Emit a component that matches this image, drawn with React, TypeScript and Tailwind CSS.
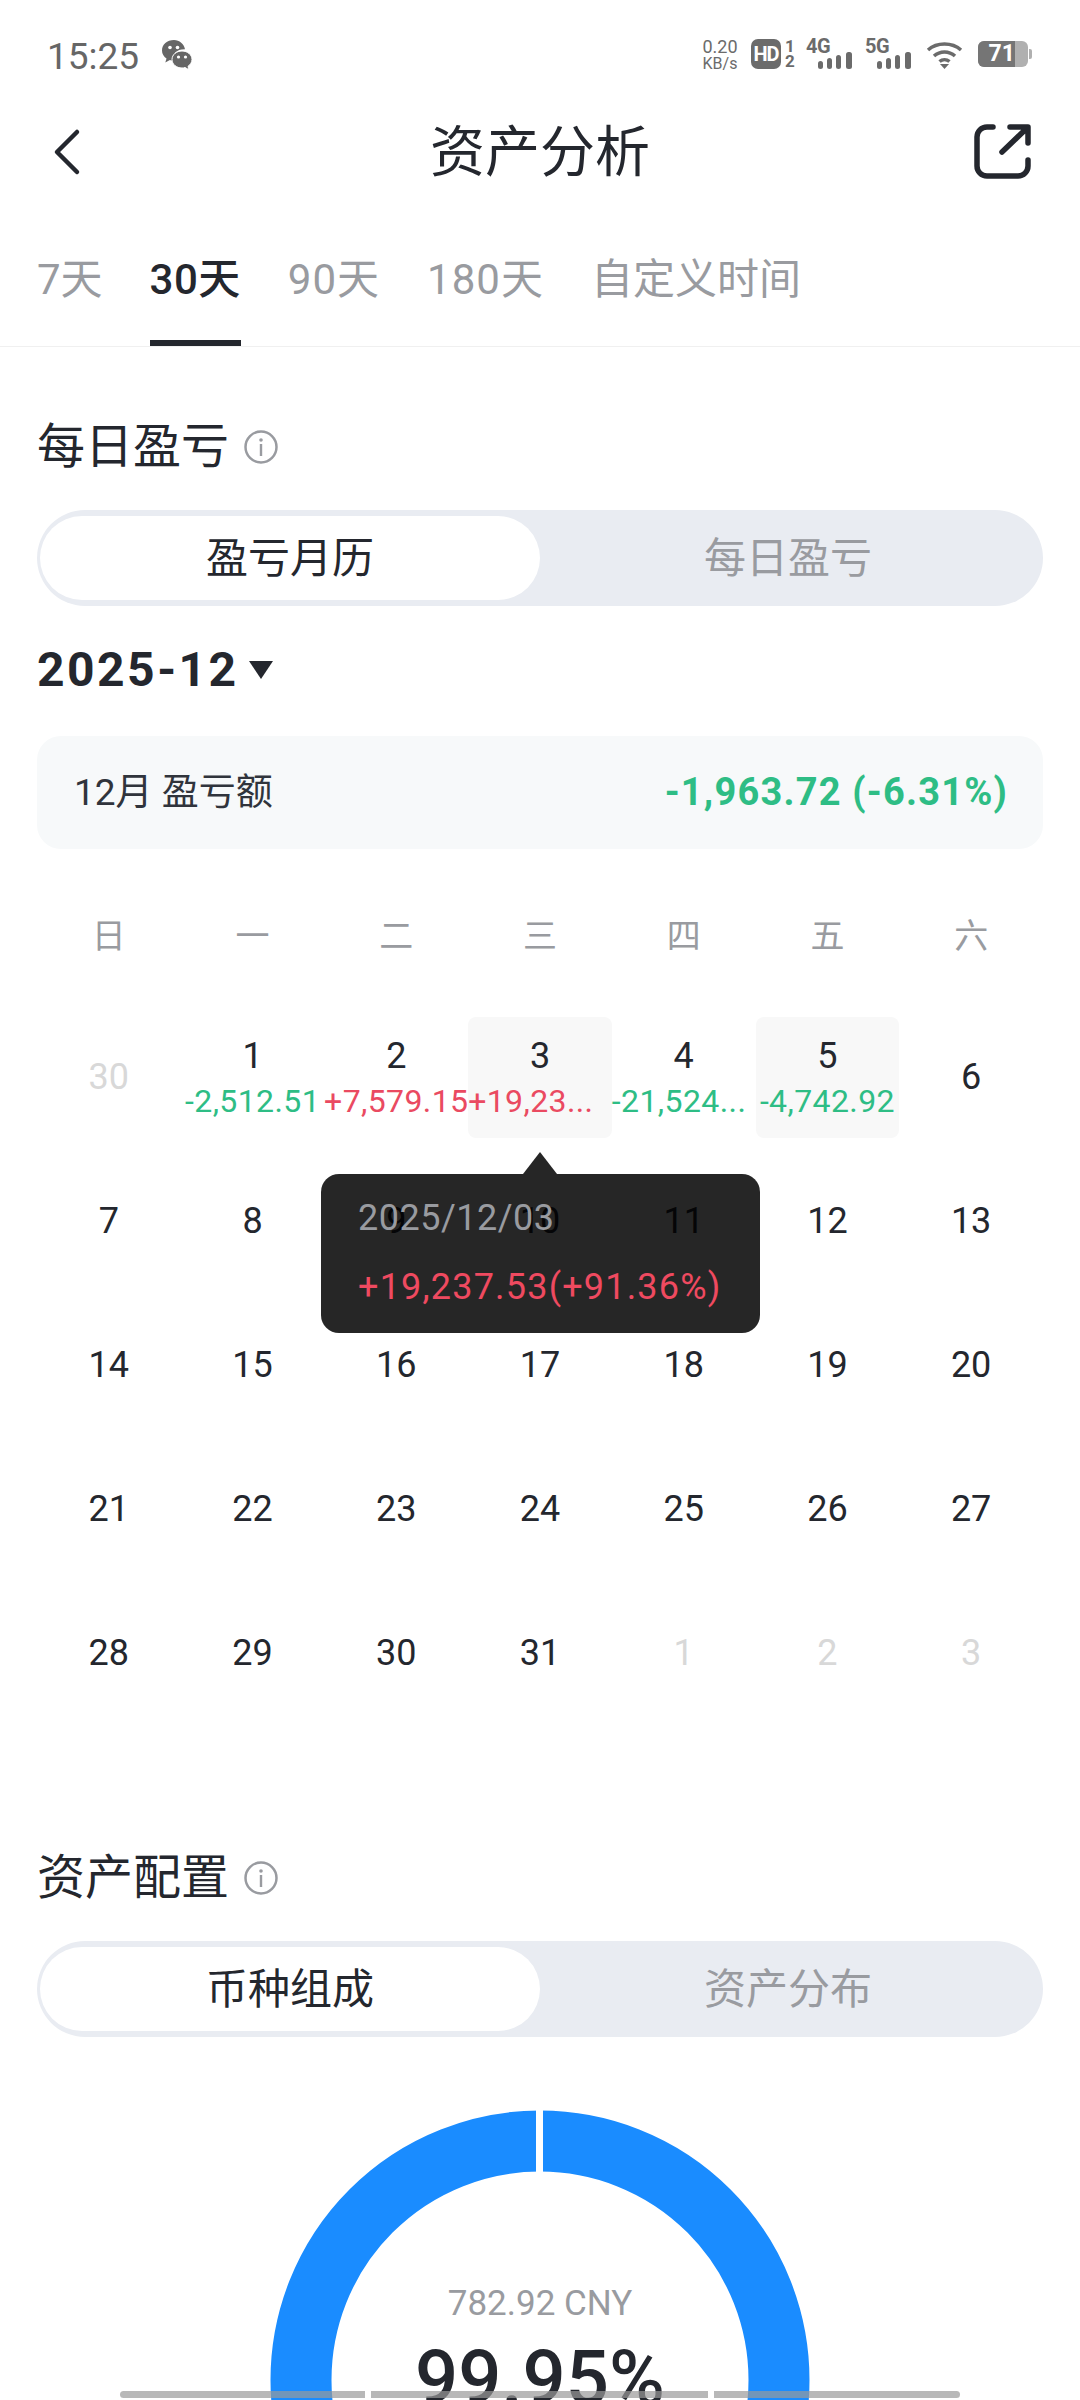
const FONT = "font-['Roboto','Noto_Sans_CJK_SC',sans-serif]";

const rows = [
  [30, 1, 2, 3, 4, 5, 6],
  [7, 8, 9, 10, 11, 12, 13],
  [14, 15, 16, 17, 18, 19, 20],
  [21, 22, 23, 24, 25, 26, 27],
  [28, 29, 30, 31, 1, 2, 3],
];

// first row values, keyed by date
const pnl: Record<number, { text: string; up: boolean; marked?: boolean; cut?: boolean }> = {
  1: { text: "-2,512.51", up: false },
  2: { text: "+7,579.15", up: true },
  3: { text: "+19,23...", up: true, marked: true, cut: true },
  4: { text: "-21,524...", up: false, cut: true },
  5: { text: "-4,742.92", up: false, marked: true },
};

function Signal() {
  return (
    <svg width="35" height="17" viewBox="0 0 35 17" className="absolute left-[12px] top-[13px]">
      <rect x="0" y="9" width="5" height="8" rx="2.5" fill="#6b6b6b" />
      <rect x="9" y="6" width="5" height="11" rx="2.5" fill="#6b6b6b" />
      <rect x="18" y="3" width="5" height="14" rx="2.5" fill="#6b6b6b" />
      <rect x="28" y="0" width="6" height="17" rx="2.5" fill="#6b6b6b" />
    </svg>
  );
}

function StatusBar() {
  return (
    <div className="h-[92px] pl-[47px] pr-[48px] flex items-center justify-between pt-[20px]">
      <div className="flex items-center">
        <span className="text-[37px] leading-none text-[#666666]">15:25</span>
        <svg width="32" height="32" viewBox="0 0 32 32" className="ml-[22px] -mt-[2px]">
          <path d="M13 1C6 1 1 5.600 1 11.500c0 3.400 1.800 6.200 4.500 8l-1.200 4 4.600-2.400C10 21.500 11 21.700 12 21.700 11 15 15.500 10 24 10.200 23 5 18.500 1 13 1z" fill="#666666" />
          <circle cx="9" cy="8.500" r="1.800" fill="#fff" />
          <circle cx="16.500" cy="8.500" r="1.800" fill="#fff" />
          <path d="M21 12c-5.500 0-10 3.600-10 8.500s4.500 8.500 10 8.500c1 0 2-.1 3-.5l4 2.300-1-3.500c2.400-1.600 4-4 4-6.800 0-4.900-4.500-8.500-10-8.500z" fill="#666666" stroke="#fff" strokeWidth="1" />
          <circle cx="17.500" cy="18" r="1.600" fill="#fff" />
          <circle cx="24.500" cy="18" r="1.600" fill="#fff" />
        </svg>
      </div>
      <div className="flex items-start text-[#6b6b6b] -mt-[2px]">
        <div className="w-[38px] flex flex-col items-center">
          <span className="text-[18px] leading-[16px]">0.20</span>
          <span className="text-[16px] leading-[17px]">KB/s</span>
        </div>
        <div className="ml-[12px] w-[30px] h-[30px] rounded-[7px] bg-[#6b6b6b] text-white text-[20px] font-bold leading-[30px] text-center tracking-[-1px]">HD</div>
        <div className="ml-[3px] w-[12px] flex flex-col items-center text-[17px] font-bold leading-[15px]">
          <span>1</span>
          <span>2</span>
        </div>
        <div className="ml-[10px] w-[47px] h-[30px] relative">
          <span className="text-[20px] font-bold leading-[14px] block tracking-[-0.5px]">4G</span>
          <Signal />
        </div>
        <div className="ml-[12px] w-[48px] h-[30px] relative">
          <span className="text-[20px] font-bold leading-[14px] block tracking-[-0.5px]">5G</span>
          <Signal />
        </div>
        <svg width="37" height="28" viewBox="0 0 37 28" className="ml-[13px] mt-[2px]">
          <path d="M2 9C11 1 26 1 35 9" fill="none" stroke="#6b6b6b" strokeWidth="3.500" />
          <path d="M8 15C14 9.500 23 9.500 29 15" fill="none" stroke="#6b6b6b" strokeWidth="3.500" />
          <path d="M13.500 20.500c3-2.500 7-2.500 10 0" fill="none" stroke="#6b6b6b" strokeWidth="3.500" />
          <path d="M14 23h9l-4.500 5z" fill="#6b6b6b" />
        </svg>
        <div className="ml-[15px] mt-[2px] flex items-center">
          <div className="w-[50px] h-[26px] rounded-[6px] bg-[#b0b0b0] overflow-hidden">
            <div className="w-[37px] h-full bg-[#757575] text-white text-[23px] font-bold leading-[26px] text-right">71</div>
          </div>
          <div className="w-[3px] h-[10px] rounded-r-[2px] bg-[#b0b0b0] ml-[1px]" />
        </div>
      </div>
    </div>
  );
}

function Segment({ on, off }: { on: string; off: string }) {
  return (
    <div className="h-[96px] rounded-full bg-[#e9ecf2] flex items-center pl-[3px] pr-[7px] text-[42px]">
      <div className="w-[500px] h-[84px] rounded-full bg-white text-[#24272e] flex items-center justify-center">
        {on}
      </div>
      <div className="flex-1 text-center text-[#999ba0]">{off}</div>
    </div>
  );
}

function SectionTitle({ text }: { text: string }) {
  return (
    <div className="h-[60px] flex items-center text-[48px] text-[#24272e]">
      {text}
      <svg width="36" height="36" viewBox="0 0 36 36" className="ml-[14px]">
        <circle cx="18" cy="18" r="15.500" fill="none" stroke="#999ba0" strokeWidth="2.500" />
        <circle cx="18" cy="11" r="1.800" fill="#999ba0" />
        <rect x="16.800" y="15" width="2.400" height="12" fill="#999ba0" />
      </svg>
    </div>
  );
}

function DayCell({ day, rowIndex, colIndex }: { day: number; rowIndex: number; colIndex: number }) {
  const muted = (rowIndex === 0 && colIndex === 0) || (rowIndex === 4 && colIndex > 3);
  const item = rowIndex === 0 ? pnl[day] : undefined;

  if (item) {
    return (
      <div className="h-[144px] flex items-center">
        <div className={`w-full h-[121px] rounded-[8px] pt-[21px] flex flex-col items-center ${item.marked ? "bg-[#f8f8f8]" : ""}`}>
          <span className="text-[36px] leading-[36px] text-[#24272e]">{day}</span>
          <span className={`mt-[9px] text-[32px] leading-[36px] whitespace-nowrap tracking-[0.4px] ${item.cut ? "self-start" : ""} ${item.up ? "text-[#ea4a61]" : "text-[#2ebd85]"}`}>
            {item.text}
          </span>
        </div>
      </div>
    );
  }

  return (
    <div className={`h-[144px] flex items-center justify-center text-[36px] ${muted ? "text-[#d8d8d8]" : "text-[#24272e]"}`}>
      {day}
    </div>
  );
}

function Calendar() {
  return (
    <div className="relative mt-[47px]">
      <div className="grid grid-cols-7 h-[80px] items-center text-center text-[34px] text-[#999ba0]">
        {["日", "一", "二", "三", "四", "五", "六"].map((w) => (
          <span key={w}>{w}</span>
        ))}
      </div>
      <div className="grid grid-cols-7 mt-[29px]">
        {rows.map((row, r) =>
          row.map((day, c) => <DayCell key={`${r}-${c}`} day={day} rowIndex={r} colIndex={c} />),
        )}
      </div>

      {/* tooltip for the 3rd, see-through so the row under it still shows */}
      <div className="absolute left-[284px] top-[278px] w-[439px] h-[159px] rounded-[18px] bg-black/85 pl-[37px]">
        <div className="absolute left-[202px] -top-[22px] w-0 h-0 border-x-[17px] border-x-transparent border-b-[22px] border-b-black/85" />
        <div className="mt-[26px] text-[36px] leading-[36px] text-[#999ba0] tracking-[0.5px]">2025/12/03</div>
        <div className="mt-[33px] text-[36px] leading-[36px] text-[#ef4a60] whitespace-nowrap tracking-[1.2px]">+19,237.53(+91.36%)</div>
      </div>
    </div>
  );
}

export default function App() {
  return (
    <div className={`relative w-[1080px] h-[2400px] overflow-hidden bg-white ${FONT}`}>
      <StatusBar />

      {/* Header */}
      <header className="h-[120px] px-[44px] flex items-center justify-between">
        <div className="w-[62px]">
          <svg width="32" height="48" viewBox="0 0 32 48" fill="none" stroke="#24272e" strokeWidth="4.500" className="ml-[6px]" strokeLinecap="round" strokeLinejoin="round">
            <path d="M27 4 7 24l20 20" />
          </svg>
        </div>
        <h1 className="text-[55px] font-normal text-[#24272e]">资产分析</h1>
        <div className="w-[62px] flex justify-end">
          <svg width="58" height="56" viewBox="0 0 58 56" fill="none" stroke="#24272e" strokeWidth="5.500" className="mr-[4px]" strokeLinecap="round" strokeLinejoin="round">
            <path d="M19 3h-6A10 10 0 0 0 3 13v29a10 10 0 0 0 10 10h31a10 10 0 0 0 10-10v-6" />
            <path d="M28 28 52 5M36 3h18v16" />
          </svg>
        </div>
      </header>

      {/* Tabs */}
      <nav className="h-[135px] border-b-[1px] border-[#f0f0f0] px-[37px] flex gap-[47px] text-[42px] text-[#999ba0]">
        <div className="pt-[36px]">7天</div>
        <div className="h-[134px] pt-[36px] border-b-[6px] border-[#24272e] font-medium text-[#24272e] tracking-[0.5px]">30天</div>
        <div className="pt-[36px] tracking-[1px]">90天</div>
        <div className="pt-[36px] tracking-[1px]">180天</div>
        <div className="pt-[36px]">自定义时间</div>
      </nav>

      <main className="px-[37px]">
        <div className="mt-[70px]">
          <SectionTitle text="每日盈亏" />
        </div>
        <div className="mt-[33px]">
          <Segment on="盈亏月历" off="每日盈亏" />
        </div>

        <div className="mt-[34px] h-[60px] flex items-center text-[48px] font-bold text-[#24272e] tracking-[2.5px]">
          2025-12
          <span className="ml-[10px] w-0 h-0 border-x-[12px] border-x-transparent border-t-[18px] border-t-[#24272e]" />
        </div>

        <div className="mt-[36px] h-[113px] rounded-[24px] bg-[#f7f9fa] pl-[37px] pr-[35px] flex items-center justify-between">
          <span className="text-[37px] text-[#30343c]">12月 盈亏额</span>
          <span className="text-[38px] font-bold text-[#2ebd85] tracking-[1.2px]">-1,963.72 (-6.31%)</span>
        </div>

        <Calendar />

        <div className="mt-[123px]">
          <SectionTitle text="资产配置" />
        </div>
        <div className="mt-[33px]">
          <Segment on="币种组成" off="资产分布" />
        </div>

        {/* Donut */}
        <div className="relative mx-auto mt-[73px] w-[540px] h-[540px]">
          <svg width="540" height="540" viewBox="0 0 540 540">
            <circle cx="270" cy="270" r="239" fill="none" stroke="#1a8cff" strokeWidth="61" />
            <rect x="266" y="0" width="7" height="62" fill="#ffffff" />
          </svg>
          <div className="absolute inset-x-0 top-[172px] text-center text-[35px] leading-[44px] text-[#999ba0]">782.92 CNY</div>
          <div className="absolute inset-x-0 top-[218px] text-center text-[76px] font-medium leading-[100px] text-[#24272e]">99.95%</div>
        </div>
      </main>

      {/* scroll indicator over the page */}
      <div className="absolute left-[120px] bottom-[2px] w-[840px] h-[7px] flex gap-[6px]">
        <div className="w-[245px] rounded-l-full bg-[#9a9a9a]/70" />
        <div className="w-[337px] bg-[#9a9a9a]/70" />
        <div className="flex-1 rounded-r-full bg-[#9a9a9a]/70" />
      </div>
    </div>
  );
}
